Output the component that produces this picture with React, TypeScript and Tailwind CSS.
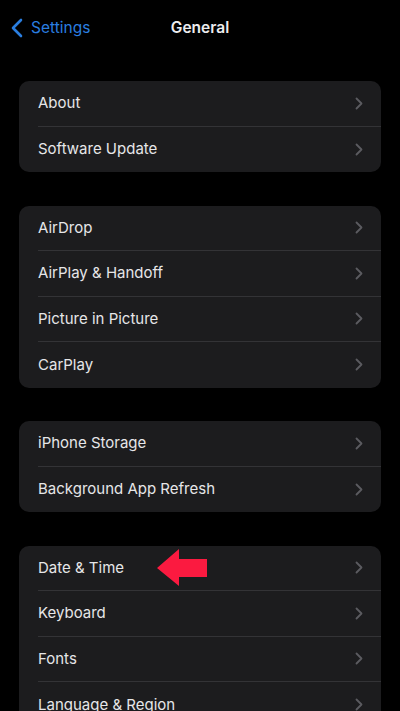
import React from 'react';

// ============================================
// iOS Settings > General
// ============================================

const GROUPS: string[][] = [
    ['About', 'Software Update'],
    ['AirDrop', 'AirPlay & Handoff', 'Picture in Picture', 'CarPlay'],
    ['iPhone Storage', 'Background App Refresh'],
    ['Date & Time', 'Keyboard', 'Fonts', 'Language & Region'],
];

const Chevron = () => (
    <svg width="8" height="13" viewBox="0 0 8 13" fill="none">
        <path d="M1.5 1.5 L6.5 6.5 L1.5 11.5" stroke="#5b5b60" strokeWidth="1.8" strokeLinecap="round" strokeLinejoin="round" />
    </svg>
);

// red annotation arrow pointing at "Date & Time"
const RedArrow = () => (
    <svg width="50" height="37" viewBox="0 0 50 37">
        <polygon points="0,19 22,0 22,10 50,10 50,28 22,28 22,37" fill="#fb1a40" />
    </svg>
);

const Row = ({ label, last, arrow }: { label: string; last: boolean; arrow?: boolean }) => (
    <div className="relative flex h-[45.5px] items-center pl-[19px]">
        <div
            className={`flex h-full flex-1 items-center justify-between pr-[18px] ${
                last ? '' : 'border-b border-[#333336]'
            }`}
        >
            <span className="text-[15px] text-[#e6e6e8]">{label}</span>
            <Chevron />
        </div>
        {arrow && (
            <span className="absolute left-[138px] top-[3px]">
                <RedArrow />
            </span>
        )}
    </div>
);

export default function App() {
    return (
        <div
            className="h-[711px] w-[400px] overflow-hidden bg-black"
            style={{ fontFamily: 'Inter, "Liberation Sans", sans-serif' }}
        >
            {/* Nav bar */}
            <div className="relative flex h-[56px] items-center">
                <div className="flex items-center pl-[11px] text-[#2a7ee0]">
                    <svg width="12" height="20" viewBox="0 0 12 20" fill="none">
                        <path d="M10 2 L2 10 L10 18" stroke="#2a7ee0" strokeWidth="2.6" strokeLinecap="round" strokeLinejoin="round" />
                    </svg>
                    <span className="ml-[8px] text-[15.5px]">Settings</span>
                </div>
                <span className="absolute left-1/2 -translate-x-1/2 text-[15.5px] font-semibold text-[#ececee]">
                    General
                </span>
            </div>

            {/* Groups */}
            <div className="mt-[25px] flex flex-col gap-[33.5px] px-[19px]">
                {GROUPS.map((group, gi) => (
                    <div key={gi} className="overflow-hidden rounded-[10px] bg-[#1c1c1e]">
                        {group.map((label, i) => (
                            <Row key={label} label={label} last={i === group.length - 1} arrow={label === 'Date & Time'} />
                        ))}
                    </div>
                ))}
            </div>
        </div>
    );
}
